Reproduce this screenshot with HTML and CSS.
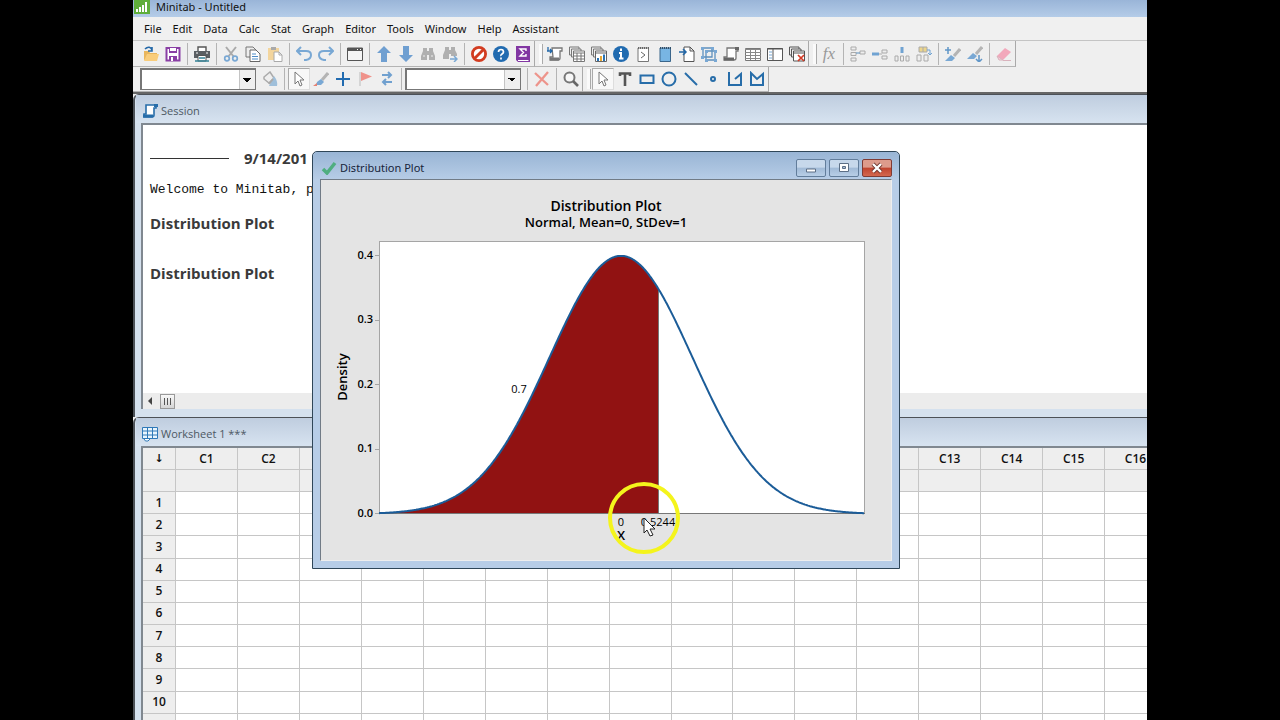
FILE: index.html
```html
<!DOCTYPE html>
<html lang="en">
<head>
<meta charset="utf-8">
<title>Minitab - Untitled</title>
<link rel="stylesheet" href="styles.css">
</head>
<body>
<div class="app">
  <header class="app-title">
    <svg class="logo" viewBox="0 0 16 14"><rect width="16" height="14" fill="#5fae3a"/><path d="M2 12V9h2v3zM5 12V7h2v5zM8 12V5h2v7zM11 12V2h2v10z" fill="#fff"/></svg>
    <span>Minitab - Untitled</span>
  </header>
  <nav class="menu">
    <button>File</button><button>Edit</button><button>Data</button><button>Calc</button><button>Stat</button><button>Graph</button><button>Editor</button><button>Tools</button><button>Window</button><button>Help</button><button>Assistant</button>
  </nav>
  <div class="bar">
    <div class="group">
      <button class="tool" aria-label="Open"><svg viewBox="0 0 16 16"><path d="M1 14V5h5l1 2h7v3" fill="#e9b65c"/><path d="M1 15l3-7h12l-2 7z" fill="#f9cd7c"/><path d="M2 3c3-3 6-2 7 1M9 1v4H5" fill="none" stroke="#2468a8" stroke-width="1.600"/></svg></button>
      <button class="tool" aria-label="Save"><svg viewBox="0 0 16 16"><path d="M1.500 2h13v12.500h-13z" fill="#fff" stroke="#8a3fa5" stroke-width="2"/><path d="M4 2h8v5H4zM4 10h8v5H4z" fill="#8a3fa5"/><path d="M5 2h6v3H5zM6 11h2v4H6z" fill="#fff"/></svg></button>
      <i class="sep"></i>
      <button class="tool" aria-label="Print"><svg viewBox="0 0 16 16"><path d="M4 5V1h8v4" fill="#fff" stroke="#555" stroke-width="1.400"/><path d="M0 5h16v7H0z" fill="#5b5f63"/><path d="M2 7h2M12 7h2" stroke="#fff"/><path d="M4 9.500h8V15H4z" fill="#fff" stroke="#555"/><path d="M5 12h6M1 15h14" stroke="#358296" stroke-width="1.500"/></svg></button>
      <i class="sep"></i>
      <button class="tool" aria-label="Cut"><svg viewBox="0 0 16 16"><path d="M3 1l8 10M13 1L5 11" stroke="#aaa" stroke-width="2"/><g fill="none" stroke="#79a8d4" stroke-width="1.700"><circle cx="4" cy="12.500" r="2.300"/><circle cx="12" cy="12.500" r="2.300"/></g></svg></button>
      <button class="tool" aria-label="Copy"><svg viewBox="0 0 16 16"><path d="M1 1h7l3 3v7H1z" fill="#eee" stroke="#777"/><path d="M5 4h6l4 4v7.500H5z" fill="#fff" stroke="#666"/><path d="M7 8h4M7 10.500h6M7 13h6" stroke="#4f8dc7"/></svg></button>
      <button class="tool" aria-label="Paste"><svg viewBox="0 0 16 16"><path d="M1 2h11v12H1z" fill="#f3d59d"/><path d="M4 1h5v3H4z" fill="#aaa"/><path d="M7 6h5l3 3v6.500H7z" fill="#fff" stroke="#aaa"/><path d="M12 6v3h3" fill="none" stroke="#aaa"/></svg></button>
      <i class="sep"></i>
      <button class="tool" aria-label="Undo"><svg viewBox="0 0 16 16"><path d="M5 1L1 5l4 4M1 5h9q5 0 5 4t-5 5H8" fill="none" stroke="#79a8d4" stroke-width="2"/></svg></button>
      <button class="tool" aria-label="Redo"><svg viewBox="0 0 16 16"><path d="M11 1l4 4-4 4M15 5H6Q1 5 1 9t5 5h2" fill="none" stroke="#79a8d4" stroke-width="2"/></svg></button>
      <i class="sep"></i>
      <button class="tool" aria-label="Dialog"><svg viewBox="0 0 16 16"><path d="M.500 2h15v12.500H.500z" fill="#f4f4f4" stroke="#555"/><path d="M0 2h16v3H0z" fill="#555"/><path d="M10 3.500h1M13 3.500h1" stroke="#fff"/></svg></button>
      <i class="sep"></i>
      <button class="tool" aria-label="Previous"><svg viewBox="0 0 16 16"><path d="M8 0l7 7h-4v9H5V7H1z" fill="#6f9fd1"/></svg></button>
      <button class="tool" aria-label="Next"><svg viewBox="0 0 16 16"><path d="M8 16l7-7h-4V0H5v9H1z" fill="#6f9fd1"/></svg></button>
      <button class="tool" aria-label="Find"><svg viewBox="0 0 16 16"><path d="M3 2h4v3h2V2h4v3l2 5v4H9V9H7v5H1v-4l2-5z" fill="#b0b0b0"/><path d="M3 10h2M11 10h2" stroke="#eee"/></svg></button>
      <button class="tool" aria-label="Find next"><svg viewBox="0 0 16 16"><path d="M3 1h4v3h2V1h4v3l2 4v2H9V8H7v5H1V9l2-5z" fill="#b0b0b0"/><path d="M8 13h6M12 10l3 3-3 3" fill="none" stroke="#79a8d4" stroke-width="1.500"/></svg></button>
      <i class="sep"></i>
      <button class="tool" aria-label="Stop"><svg viewBox="0 0 16 16"><circle cx="8" cy="8" r="6.600" fill="#fff" stroke="#d23c20" stroke-width="2.800"/><path d="M12 4l-8 8" stroke="#d23c20" stroke-width="2.800"/></svg></button>
      <button class="tool" aria-label="Help"><svg viewBox="0 0 16 16"><circle cx="8" cy="8" r="8" fill="#216bb0"/><path d="M5.500 6q0-2.500 2.500-2.500T10.500 6Q10.500 7 9 8T8 10M8 11.500v2" fill="none" stroke="#fff" stroke-width="1.700"/></svg></button>
      <button class="tool" aria-label="StatGuide"><svg viewBox="0 0 16 16"><path d="M1 0h14v16H3l-2-2z" fill="#8136a2"/><path d="M3 14.500h10.500" stroke="#fff"/><path d="M11 5V3H5l3.500 3.500L5 10h6V8" fill="none" stroke="#fff" stroke-width="1.400"/></svg></button>
    </div>
    <div class="group next">
      <button class="tool" aria-label="Show session"><svg viewBox="0 0 16 16"><path d="M5 2h10v3h-2v7q0 2-2 2H3v-3h3z" fill="#fff" stroke="#777" stroke-width="1.300"/><path d="M3 14.500h9v-3H3z" fill="#777"/><path d="M0 5h5M3 3l2 2-2 2M1 1v4" fill="none" stroke="#2468a8" stroke-width="1.300"/></svg></button>
      <button class="tool" aria-label="Worksheets"><svg viewBox="0 0 16 16"><path d="M2 9H.500V1H10v2M4 11H2.500V3H12v2" fill="none" stroke="#777"/><path d="M4.500 5h11v10.500h-11zM4.500 7h11M4.500 10h11M4.500 13h11M8 7v8M12 7v8" fill="#fff" stroke="#777"/></svg></button>
      <button class="tool" aria-label="Graphs"><svg viewBox="0 0 16 16"><path d="M2 9H.500V1H10v2M4 11H2.500V3H12v2" fill="none" stroke="#777"/><path d="M4.500 5h11v10.500h-11zM4.500 7h11" fill="#fff" stroke="#666"/><path d="M6 12h2v3H6z" fill="#2872b3"/><path d="M9 10h2v5H9z" fill="#e5a634"/><path d="M12 8.500h2V15h-2z" fill="#2872b3"/></svg></button>
      <button class="tool" aria-label="Info"><svg viewBox="0 0 16 16"><circle cx="8" cy="8" r="8" fill="#216bb0"/><path d="M8 2.500v2.500M6 7h2v5.500M6 12.500h4.500" fill="none" stroke="#fff" stroke-width="2"/></svg></button>
      <button class="tool" aria-label="History"><svg viewBox="0 0 16 16"><path d="M3 2h10.500v13.500H3z" fill="#fff" stroke="#777"/><path d="M3 2h11" stroke="#666" stroke-width="2" stroke-dasharray="1 1"/><path d="M6 6l4 3-4 3" fill="none" stroke="#666"/></svg></button>
      <button class="tool" aria-label="Report pad"><svg viewBox="0 0 16 16"><path d="M3 2h10.500v13.500H3z" fill="#78b5e3" stroke="#3b668b"/><path d="M3 2h11" stroke="#304e69" stroke-width="2" stroke-dasharray="1 1"/></svg></button>
      <button class="tool" aria-label="Related"><svg viewBox="0 0 16 16"><path d="M5 1h6l4 4v10.500H5zM11 1v4h4" fill="#fff" stroke="#555"/><path d="M0 6h6M4 3l3 3-3 3" fill="none" stroke="#2468a8" stroke-width="1.500"/></svg></button>
      <button class="tool" aria-label="Group"><svg viewBox="0 0 16 16"><path d="M2 2h9v9H2zM5 5h9v9H5z" fill="none" stroke="#5d90bd" stroke-width="1.300"/><path d="M0 1h3v3H0zM10 1h3v3h-3zM0 10h3v3H0zM4 4h3v3H4zM13 4h3v3h-3zM4 13h3v3H4zM13 13h3v3h-3z" fill="#79a8d4"/></svg></button>
      <button class="tool" aria-label="Session"><svg viewBox="0 0 16 16"><path d="M4 2h11v3h-2v7q0 2-2 2H1v-3h3z" fill="#fff" stroke="#777" stroke-width="1.300"/><path d="M1 14.500h10v-3H1zM12 1h4v3h-4z" fill="#666"/></svg></button>
      <button class="tool" aria-label="Data"><svg viewBox="0 0 16 16"><path d="M.500 2.500h15v12H.500z" fill="#fff" stroke="#777"/><path d="M0 3.500h16M0 6.500h16M0 9.500h16M0 12.500h16M5.500 3v11M10.500 3v11" stroke="#888"/></svg></button>
      <button class="tool" aria-label="Project"><svg viewBox="0 0 16 16"><path d="M.500 2.500h15v12H.500z" fill="#fff" stroke="#555"/><path d="M6 2v13M0 3h16" stroke="#555"/><path d="M2 6h3M2 9h3M2 12h3" stroke="#79a8d4"/></svg></button>
      <button class="tool" aria-label="Close graphs"><svg viewBox="0 0 16 16"><path d="M2 9H.500V1H10v2M4 11H2.500V3H12v2" fill="none" stroke="#555"/><path d="M4.500 5h11v10h-11zM4.500 7h11" fill="#fff" stroke="#555"/><path d="M9 9l6 6M15 9l-6 6" stroke="#d33b26" stroke-width="1.700"/></svg></button>
    </div>
    <div class="group next">
      <button class="tool fx" aria-label="Formula">fx</button>
      <i class="sep"></i>
      <button class="tool" aria-label="Align rows"><svg viewBox="0 0 16 16"><path d="M1 1h5v3H1zM1 6.500h5v3H1zM1 12h5v3H1zM10 5h5v3h-5z" fill="#eee" stroke="#aaa"/><path d="M6 7h4" stroke="#5d90bd"/></svg></button>
      <button class="tool" aria-label="Align columns"><svg viewBox="0 0 16 16"><path d="M0 8h7" stroke="#70a3d2" stroke-width="3"/><path d="M10 4h5v3h-5zM10 10h5v3h-5zM7 8h3" fill="#eee" stroke="#aaa"/></svg></button>
      <button class="tool" aria-label="Distribute"><svg viewBox="0 0 16 16"><path d="M8 1v6" stroke="#70a3d2" stroke-width="3"/><path d="M1 10h3v5H1zM6.500 10h3v5h-3zM12 10h3v5h-3z" fill="#eee" stroke="#aaa"/></svg></button>
      <button class="tool" aria-label="Move columns"><svg viewBox="0 0 16 16"><path d="M3 1h8v5H3zM7 1v5" fill="#ecd58b" stroke="#aaa"/><path d="M1 9h4v6H1zM8 9h4v6H8z" fill="#eee" stroke="#aaa"/><path d="M11 4h3v5M12 7l2 2 2-2" fill="none" stroke="#70a3d2"/></svg></button>
      <i class="sep"></i>
      <button class="tool" aria-label="Brush up"><svg viewBox="0 0 16 16"><path d="M15 3L9 10" stroke="#b4b4b4" stroke-width="3"/><path d="M0 15l6-6 4 3-3 3z" fill="#79a8d4"/><path d="M3 1v7M0 4h6" stroke="#6096c8" stroke-width="1.500"/></svg></button>
      <button class="tool" aria-label="Brush down"><svg viewBox="0 0 16 16"><path d="M15 1L9 8" stroke="#b4b4b4" stroke-width="3"/><path d="M0 13l6-6 4 3-3 3z" fill="#79a8d4"/><path d="M12 9v7M9 13l3 3 3-3" fill="none" stroke="#6096c8" stroke-width="1.500"/></svg></button>
      <i class="sep"></i>
      <button class="tool" aria-label="Erase"><svg viewBox="0 0 16 16"><path d="M1 10l8-8 6 4-8 8H3z" fill="#f2a8bb"/><path d="M1 10l6 4H3zM7 14.500h8" fill="#f8d0dc" stroke="#d9b3bd"/></svg></button>
    </div>
  </div>
  <div class="bar">
    <div class="group">
      <select class="combo" aria-label="Column"><option></option></select>
      <button class="tool" aria-label="Fill"><svg viewBox="0 0 16 16"><path d="M2 6l6-5 4 6-5 5-5-4z" fill="#eee" stroke="#aaa" stroke-width="1.500"/><path d="M12 5q4 5 3 10H7z" fill="#9fbfda"/><path d="M11 8l-4 5" stroke="#aaa" stroke-width="2"/></svg></button>
      <i class="sep"></i>
      <button class="tool on" aria-label="Select"><svg viewBox="0 0 16 16"><path d="M4 1v12l3-3 2 5 2-1-2-5h4z" fill="#fff" stroke="#777"/></svg></button>
      <button class="tool" aria-label="Brush"><svg viewBox="0 0 16 16"><path d="M15 2l-6 7" stroke="#b4b4b4" stroke-width="3"/><path d="M4 11l4-3 3 3-3 3H3z" fill="#79a8d4"/><path d="M0 15l4-3v3z" fill="#e58173"/></svg></button>
      <button class="tool" aria-label="Crosshair"><svg viewBox="0 0 16 16"><path d="M8 1v14M1 8h14" stroke="#216bb0" stroke-width="2"/></svg></button>
      <button class="tool" aria-label="Flag"><svg viewBox="0 0 16 16"><path d="M3 1v14" stroke="#bbb"/><path d="M4 1l11 4.500L4 10z" fill="#ef928a"/></svg></button>
      <button class="tool" aria-label="Swap"><svg viewBox="0 0 16 16"><path d="M3 4h9M9 1l3 3-3 3M13 11H4M7 8l-3 3 3 3" fill="none" stroke="#70a0cf" stroke-width="2"/></svg></button>
      <i class="sep"></i>
      <select class="combo" aria-label="Graph item"><option></option></select>
      <i class="sep"></i>
      <button class="tool" aria-label="Delete"><svg viewBox="0 0 16 16"><path d="M1 2l13 12M14 1L2 15" stroke="#ed948b" stroke-width="2.300"/></svg></button>
      <i class="sep"></i>
      <button class="tool" aria-label="Zoom"><svg viewBox="0 0 16 16"><circle cx="6.500" cy="6.500" r="5" fill="#f7f7f7" stroke="#777" stroke-width="2"/><path d="M10 10l5 5" stroke="#666" stroke-width="2.700"/></svg></button>
    </div>
    <div class="group next">
      <button class="tool on" aria-label="Pointer"><svg viewBox="0 0 16 16"><path d="M4 1v12l3-3 2 5 2-1-2-5h4z" fill="#fff" stroke="#777"/></svg></button>
      <button class="tool" aria-label="Text"><svg viewBox="0 0 16 16"><path d="M3 5V2.500h10V5M8 2v13" fill="none" stroke="#555" stroke-width="2.600"/></svg></button>
      <button class="tool" aria-label="Rectangle"><svg viewBox="0 0 16 16"><path d="M1.500 4.500h13v7.500h-13z" fill="none" stroke="#276da9" stroke-width="2"/></svg></button>
      <button class="tool" aria-label="Ellipse"><svg viewBox="0 0 16 16"><circle cx="8" cy="8" r="6.500" fill="none" stroke="#276da9" stroke-width="2"/></svg></button>
      <button class="tool" aria-label="Line"><svg viewBox="0 0 16 16"><path d="M2 2l12 12" stroke="#276da9" stroke-width="2"/></svg></button>
      <button class="tool" aria-label="Marker"><svg viewBox="0 0 16 16"><circle cx="8" cy="8" r="2" fill="none" stroke="#276da9" stroke-width="2"/></svg></button>
      <button class="tool" aria-label="Polyline"><svg viewBox="0 0 16 16"><path d="M2 1v13h12V3L8 8" fill="none" stroke="#276da9" stroke-width="2"/></svg></button>
      <button class="tool" aria-label="Polygon"><svg viewBox="0 0 16 16"><path d="M2 2v12h12V3L8 8z" fill="none" stroke="#276da9" stroke-width="2"/></svg></button>
    </div>
  </div>

  <main class="desk">
    <section class="pane session">
      <h2 class="pane-title"><svg viewBox="0 0 16 16"><path d="M4 2h10v3h-2v7q0 2-2 2H2v-3h2z" fill="#fff" stroke="#276da9" stroke-width="1.600"/><path d="M1 14.500h10v-3H1zM12 1h4v3h-4z" fill="#276da9"/></svg>Session</h2>
      <div class="log">
        <div class="stamp"><hr class="rule"><b>9/14/201</b></div>
        <p class="mono">Welcome to Minitab, p</p>
        <h3 class="entry">Distribution Plot</h3>
        <h3 class="entry">Distribution Plot</h3>
      </div>
      <div class="scroll">
        <button class="arrow" aria-label="Scroll left"><svg viewBox="0 0 8 8"><path d="M6 0v8L2 4z" fill="#444"/></svg></button>
        <button class="thumb" aria-label="Scroll thumb"><i></i><i></i><i></i></button>
      </div>
    </section>
    <section class="pane sheet">
      <h2 class="pane-title"><svg viewBox="0 0 16 16"><path d="M.500 1.500h15v11H.500z" fill="#e9f5fd" stroke="#2f79b8"/><path d="M0 5h16M0 9h16M5.500 1v12M10.500 1v12" stroke="#2f79b8"/><path d="M2 13q1 3 4 2l2-2" fill="#fff" stroke="#2f79b8"/></svg>Worksheet 1 ***</h2>
      <div class="grid-wrap"><table class="grid"><thead id="cols"></thead><tbody id="rows"></tbody></table></div>
    </section>
  </main>

  <section class="dialog">
    <header class="dialog-title">
      <svg class="check" viewBox="0 0 16 14"><path d="M2 8l4 4 8-10" fill="none" stroke="#4fae80" stroke-width="3.500"/></svg>
      <span>Distribution Plot</span>
      <div class="controls">
        <button class="ctl" aria-label="Minimize"><svg viewBox="0 0 12 12"><path d="M1.500 7h9v3h-9z" fill="#fff" stroke="#5c6f86"/></svg></button>
        <button class="ctl" aria-label="Maximize"><svg viewBox="0 0 12 12"><path d="M1.500 1.500h9v8h-9z" fill="#fff" stroke="#5c6f86"/><path d="M4.500 4.500h3v2h-3z" fill="#a9bdd6" stroke="#5c6f86"/></svg></button>
        <button class="ctl close" aria-label="Close"><svg viewBox="0 0 12 12"><path d="M2 2l8 8M10 2l-8 8" stroke="#6d352d" stroke-width="4"/><path d="M2 2l8 8M10 2l-8 8" stroke="#fff" stroke-width="2.400"/></svg></button>
      </div>
    </header>
    <svg class="plot" viewBox="0 0 570 380">
      <rect x="58.500" y="61.500" width="485" height="272" fill="#fff" stroke="#a5a5a5"/>
      <path d="M54 75.500h4M54 140.500h4M54 204.500h4M54 269.500h4M54 333.500h4" stroke="#a5a5a5"/>
      <path id="area" fill="#911212"/>
      <path d="M337.500 110v224M58 333.500h486" stroke="#777"/>
      <path id="curve" fill="none" stroke="#1b5c98" stroke-width="2"/>
      <g class="t-title"><text x="285" y="31">Distribution Plot</text></g>
      <g class="t-sub"><text x="285" y="47">Normal, Mean=0, StDev=1</text></g>
      <g class="t-tick"><text x="52" y="79">0.4</text><text x="52" y="143">0.3</text><text x="52" y="208">0.2</text><text x="52" y="272">0.1</text><text x="52" y="337">0.0</text></g>
      <g class="t-sub"><text transform="translate(26 197) rotate(-90)">Density</text><text x="300" y="360">X</text></g>
      <g class="t-label"><text x="198" y="213">0.7</text><text x="300" y="346">0</text><text x="337" y="346">0.5244</text></g>
    </svg>
  </section>
  <svg class="pointer" viewBox="0 0 74 74"><circle cx="37" cy="37" r="34" fill="none" stroke="#f4f41c" stroke-width="4"/><path d="M37 37v15l3-3 3 6 3-1-3-6h5z" fill="#fff" stroke="#222"/></svg>
</div>
<script src="app.js"></script>
</body>
</html>
```
FILE: styles.css
```css
* { box-sizing: border-box; }
body {
  margin: 0;
  padding: 0 133px;
  background: #000;
  font: 11px/16px "Open Sans", "Noto Sans", sans-serif;
  color: #111;
}
button {
  padding: 0;
  border: 0;
  background: none;
  font: inherit;
  color: inherit;
}
.app {
  position: relative;
  display: flex;
  flex-direction: column;
  height: 100vh;
  overflow: hidden;
  background: #efefef;
}
.app-title {
  display: flex;
  align-items: center;
  gap: 6px;
  flex: none;
  height: 17px;
  padding: 0 1px 3px;
  background: linear-gradient(#9ab5d8, #b4cce8);
  font-family: "Noto Sans", sans-serif;
}
.logo { width: 16px; height: 14px; }
.menu {
  display: flex;
  flex: none;
  gap: 11px;
  height: 24px;
  padding-left: 11px;
  background: #f0f0f0;
  border-bottom: 1px solid #c4c4c4;
  font-family: "Noto Sans", sans-serif;
}
.bar {
  display: flex;
  flex: none;
  height: 26px;
}
.bar + .bar { height: 25px; }
.group {
  display: flex;
  align-items: center;
  padding-left: 7px;
  border-right: 1px solid #a9a9a9;
  border-bottom: 1px solid #b4b4b4;
}
.next::before {
  content: "";
  width: 3px;
  height: 20px;
  margin: 0 1px 0 -3px;
  border-right: 1px solid #aaa;
  background: #fafafa;
}
.tool {
  display: grid;
  place-items: center;
  width: 22px;
  height: 22px;
}
.tool svg { width: 16px; height: 16px; }
.tool.on {
  background: #f8f8f8;
  border: 1px solid #ccc;
  border-color: #aaa #ddd #ddd #aaa;
}
.fx {
  font: italic 17px/20px "Liberation Serif", serif;
  color: #999;
}
.sep {
  width: 1px;
  height: 22px;
  margin: 0 3px;
  background: #b4b4b4;
}
.combo {
  width: 116px;
  height: 22px;
  margin: 0 3px 0 0;
  border: 1px solid #777;
  border-width: 2px 1px 1px 2px;
  border-radius: 0;
  appearance: none;
  background:
    linear-gradient(45deg, transparent 50%, #000 50%) right 8px top 8px / 4px 4px no-repeat,
    linear-gradient(-45deg, transparent 50%, #000 50%) right 4px top 8px / 4px 4px no-repeat,
    linear-gradient(90deg, #fff calc(100% - 16px), #999 calc(100% - 16px), #efefef calc(100% - 15px));
  background:
    conic-gradient(from -45deg at 50% 100%, #000 90deg, transparent 0) right 4px top 8px / 0 0 no-repeat,
    linear-gradient(to top right, transparent 50%, #000 50%) right 8px top 8px / 4px 4px no-repeat,
    linear-gradient(to top left, transparent 50%, #000 50%) right 4px top 8px / 4px 4px no-repeat,
    linear-gradient(90deg, #fff calc(100% - 16px), #999 calc(100% - 16px), #efefef calc(100% - 15px));
}
.desk {
  display: flex;
  flex: 1;
  flex-direction: column;
  min-height: 0;
  border-top: 2px solid #666;
}
.pane {
  display: flex;
  flex-direction: column;
  flex: none;
  padding-left: 6px;
  border: solid #4c5157;
  border-width: 1px 0 0 2px;
  border-top-left-radius: 6px;
  background: #d5e1ee;
}
.session { height: 323px; padding-bottom: 8px; }
.sheet { flex: 1; min-height: 0; }
.pane-title {
  display: flex;
  align-items: center;
  gap: 3px;
  flex: none;
  height: 28px;
  margin: 0 0 0 -5px;
  padding: 4px 0 0 6px;
  background: linear-gradient(#bfcddf, #d7e3f0);
  font-size: 11px;
  font-weight: 400;
  color: #4c5863;
}
.pane-title svg { width: 16px; height: 16px; }
.log {
  flex: 1;
  min-height: 0;
  padding: 23px 7px;
  overflow: hidden;
  border: solid #808890;
  border-width: 2px 0 0 2px;
  background: #fff;
}
.stamp {
  display: flex;
  align-items: center;
  gap: 15px;
  height: 20px;
  font-size: 15px;
  color: #3a3a3a;
}
.rule {
  width: 79px;
  margin: 0;
  border: 0;
  border-top: 1px solid #333;
}
.mono {
  margin: 14px 0 15px;
  font: 13px/16px "Liberation Mono", monospace;
}
.entry {
  margin: 0 0 30px;
  font-size: 15px;
  line-height: 20px;
  color: #3a3a3a;
}
.scroll {
  display: flex;
  align-items: center;
  gap: 6px;
  flex: none;
  height: 16px;
  padding-left: 3px;
  border-left: 2px solid #808890;
  background: #ececec;
}
.arrow { display: grid; width: 8px; }
.arrow svg { width: 8px; height: 8px; }
.thumb {
  display: flex;
  justify-content: center;
  align-items: center;
  gap: 2px;
  width: 15px;
  height: 15px;
  border: 1px solid #999;
  background: linear-gradient(#f8f8f8, #d4d4d4);
}
.thumb i { width: 1px; height: 7px; background: #555; }
.grid-wrap {
  flex: 1;
  min-height: 0;
  overflow: hidden;
  border: solid #808890;
  border-width: 2px 0 0 2px;
  background: #fff;
}
.grid {
  width: 1024px;
  height: 288px;
  table-layout: fixed;
  border-spacing: 0;
}
.grid th, .grid td {
  height: 22px;
  padding: 0;
  border: solid #c6c6c6;
  border-width: 0 1px 1px 0;
}
.grid th {
  background: #eee;
  font-size: 12px;
  font-weight: 600;
  line-height: 16px;
  text-align: center;
}
.grid thead td { background: #eee; }
.grid .corner {
  width: 33px;
  font-family: "DejaVu Sans", sans-serif;
  font-size: 11px;
  font-weight: 700;
}
.dialog {
  position: absolute;
  top: 151px;
  left: 179px;
  display: flex;
  flex-direction: column;
  width: 588px;
  padding: 0 7px 7px;
  border: 1px solid #2f4658;
  border-radius: 5px 5px 0 0;
  background: #b7cde7;
}
.dialog-title {
  display: flex;
  align-items: center;
  gap: 3px;
  height: 27px;
  margin: 0 -7px;
  padding: 4px 7px 0 8px;
  border-radius: 5px 5px 0 0;
  background: linear-gradient(#99b5d5, #b6cce6);
  color: #17243a;
  font-family: "Noto Sans", sans-serif;
}
.check { width: 16px; height: 14px; }
.controls { display: flex; gap: 3px; margin-left: auto; }
.ctl {
  display: grid;
  place-items: center;
  width: 30px;
  height: 18px;
  border: 1px solid #627d9b;
  border-radius: 2px;
  background: linear-gradient(#c7d8eb 45%, #a1bad7 50%, #b8cee6);
}
.ctl svg { width: 12px; height: 12px; }
.close {
  border-color: #803b34;
  background: linear-gradient(#dd9b8c 45%, #bf432f 50%, #d3674e);
}
.plot {
  display: block;
  width: 100%;
  border: 1px solid #717b86;
  border-color: #717b86 #eee #eee #717b86;
  background: #e4e4e4;
}
.plot text { text-anchor: middle; fill: #000; }
.t-title { font-size: 14px; font-weight: 600; }
.t-sub { font-size: 13px; font-weight: 600; }
.t-tick { font-size: 11px; font-weight: 600; }
.plot .t-tick text { text-anchor: end; }
.t-label { font-size: 11px; }
.pointer {
  position: absolute;
  top: 481px;
  left: 474px;
  width: 74px;
  height: 74px;
}
```
FILE: app.js
```js
const cols = document.getElementById("cols");
const rows = document.getElementById("rows");
const names = Array.from({ length: 16 }, (_, i) => `C${i + 1}`);
cols.innerHTML =
  `<tr><th class="corner">↓</th>${names.map(n => `<th>${n}</th>`).join("")}</tr>` +
  `<tr><td></td>${"<td></td>".repeat(16)}</tr>`;
rows.innerHTML = Array.from({ length: 11 }, (_, i) =>
  `<tr><th>${i < 10 ? i + 1 : ""}</th>${"<td></td>".repeat(16)}</tr>`).join("");

// Standard normal density in plot coordinates.
const density = z => Math.exp(-z * z / 2) / Math.sqrt(2 * Math.PI);
const point = x => `${x} ${(334 - 647 * density((x - 300) / 71.5)).toFixed(1)}`;
const range = (a, b) => Array.from({ length: b - a + 1 }, (_, i) => point(a + i));
document.getElementById("curve").setAttribute("d", "M" + range(58, 543).join("L"));
document.getElementById("area").setAttribute("d", "M58 334L" + range(58, 337).join("L") + "L337 334Z");
```
